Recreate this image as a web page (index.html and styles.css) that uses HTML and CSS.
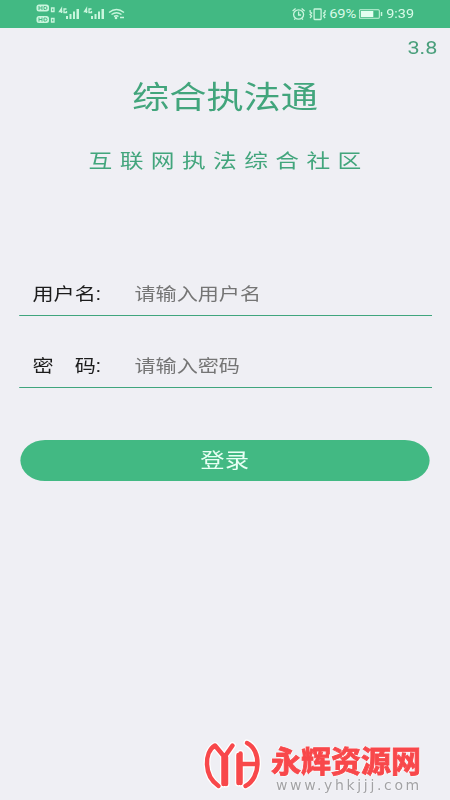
FILE: index.html
```html
<!DOCTYPE html>
<html lang="zh-CN">
<head>
<meta charset="utf-8">
<title>综合执法通</title>
<link rel="stylesheet" href="styles.css">
</head>
<body>
<main class="screen">
  <header class="status">
    <svg class="status-left" width="77" height="24" viewBox="0 0 92.4 24" preserveAspectRatio="none">
      <g fill="#c9f5dd">
        <rect x="0.5" y="4.5" width="12.5" height="7" rx="2.5"/>
        <rect x="0.5" y="16" width="12.5" height="7" rx="2.5"/>
        <path d="M30 16h2v3h-2zM33.5 14h2v5h-2zM37 11.500h2v7.500h-2zM40.500 9h2.500v10h-2.500z"/>
        <path d="M55 16h2v3h-2zM58.500 14h2v5h-2zM62 11.500h2v7.500h-2zM65.500 9h2.500v10h-2.500z"/>
        <circle cx="80" cy="18" r="1.300"/>
      </g>
      <g fill="none" stroke="#42b983" stroke-width="1"><path d="M3 6v4M3 8h3M6 6v4M8 6.500h1.500q1.500 0 1.500 1.500t-1.500 1.500H8zM3 17.500v4M3 19.500h3M6 17.500v4M8 18h1.500q1.500 0 1.500 1.500t-1.500 1.500H8z"/></g>
      <g fill="none" stroke="#c9f5dd" stroke-width="1.300">
        <path d="M15.500 8v3.500h2.500V8zM15.500 18.500V22h2.500v-3.500z"/>
        <path d="M25.500 13V8.500L23.500 11.500h3M30.500 9h-2.500v3.500h2.500V11M50.500 13V8.500L48.500 11.500h3M55.500 9h-2.500v3.500h2.500V11"/>
        <path d="M73 12.500q7.500-6 15 0M75.500 14.500q5-3.500 10 0M78 16.500q2.500-1.500 4.500 0M84 17.500h4" stroke-width="1.500"/>
      </g>
    </svg>
    <div class="status-right">
      <svg class="alarm" width="30" height="14" viewBox="0 0 36 14" preserveAspectRatio="none">
        <g fill="none" stroke="#c9f5dd" stroke-width="1.300">
          <ellipse cx="7" cy="7.500" rx="5" ry="4.700"/>
          <path d="M7 4.500v3.500h2.500M1 4l3-2.500M13 4l-3-2.500M2.500 12.500l1.500-1M11.500 12.500l-1.500-1"/>
          <rect x="22.500" y="2" width="7" height="10.500" rx="0.500"/>
          <path d="M18.500 3v2l1.500 1-1.500 1.500 1.500 1.500-1.500 2M33.500 3v2l-1.500 1 1.500 1.500-1.500 1.500 1.500 2"/>
        </g>
      </svg>
      <span class="percent">69%</span>
      <svg class="battery" width="20" height="10" viewBox="0 0 24 10" preserveAspectRatio="none">
        <rect x="0.500" y="0.700" width="20" height="8.600" rx="1" fill="none" stroke="#c9f5dd"/>
        <rect x="2" y="2" width="12.500" height="6" fill="#e4fff1"/>
        <rect x="22" y="3" width="1.500" height="4" fill="#c9f5dd"/>
      </svg>
      <span class="clock">9:39</span>
    </div>
  </header>
  <div class="version">3.8</div>
  <h1 class="title">综合执法通</h1>
  <p class="subtitle">互联网执法综合社区</p>
  <form class="form">
    <label class="field"><span class="label">用户名:</span><input class="input" type="text" placeholder="请输入用户名"></label>
    <label class="field"><span class="label">密　码:</span><input class="input" type="password" placeholder="请输入密码"></label>
    <button class="login" type="button">登录</button>
  </form>
</main>
<aside class="brand">
  <svg class="brand-logo" width="60" height="54" viewBox="0 0 60 54">
    <defs>
      <path id="mark" d="M17.500 48C2.500 38 3 14 14 7.500L23.500 19L31.500 7.500M22.500 19V46M25 19V46M37.500 17V45M39.500 15.500V45M38 26H56M46 5C60.500 12 60 40 44.500 48"/>
    </defs>
    <use href="#mark" class="mark-halo"/>
    <use href="#mark" class="mark"/>
  </svg>
  <div class="brand-text">
    <div class="brand-name">永辉资源网</div>
    <div class="brand-url">www.yhkjjj.com</div>
  </div>
</aside>
</body>
</html>
```

FILE: styles.css
```css
* { box-sizing: border-box; }
body {
  margin: 0;
  width: 450px;
  height: 800px;
  overflow: hidden;
  position: relative;
  background: #efeff4;
  font-family: Roboto, "Noto Sans CJK SC", sans-serif;
}
/* The whole screen is laid out 375px wide and stretched to 450px. */
.screen {
  width: 375px;
  height: 800px;
  transform: scaleX(1.2);
  transform-origin: 0 0;
}
.status {
  height: 28px;
  padding: 0 30px 0 29.500px;
  display: flex;
  justify-content: space-between;
  background: #42b983;
  color: #d8fae8;
}
.status-right { display: flex; align-items: center; font-size: 12.500px; }
.alarm { margin-right: -1px; }
.percent { width: 24.500px; text-align: right; font-size: 12.300px; letter-spacing: -.1px; }
.alarm, .battery { flex: none; }
.battery { margin: 0 2.500px 0 2.500px; }
.clock { font-size: 12px; }
.version {
  height: 38px;
  padding: 9px 10.500px 0 0;
  line-height: 21px;
  text-align: right;
  font-size: 18px;
  color: #4a9f7c;
}
.title {
  margin: 9px 0 0;
  text-align: center;
  font-size: 31px;
  line-height: 46px;
  font-weight: 400;
  color: #42a57c;
}
.subtitle {
  margin: 26px 0 0;
  padding-left: 6px;
  text-align: center;
  font-size: 19.800px;
  line-height: 30px;
  letter-spacing: 6.150px;
  color: #42a57c;
}
.form { margin: 94px 15.500px 0; }
.field {
  display: flex;
  align-items: center;
  height: 45px;
  margin-bottom: 27px;
  border-bottom: 1px solid #3fa57d;
  padding-left: 11.500px;
  font-size: 17.600px;
  color: #1c1c1c;
}
.label { width: 85px; padding-bottom: 2px; white-space: nowrap; }
.input {
  flex: 1;
  min-width: 0;
  padding: 2px 0 0;
  border: 0;
  outline: 0;
  background: transparent;
  font: inherit;
}
.input::placeholder { color: #757575; opacity: 1; }
.login {
  display: block;
  width: 341.500px;
  height: 41px;
  margin: 52px 0 0 1px;
  padding: 2px 0 0;
  border: 0;
  border-radius: 20.500px;
  background: #42b983;
  color: #e8fff4;
  font: 20.300px/39px Roboto, "Noto Sans CJK SC", sans-serif;
}
.brand {
  position: absolute;
  left: 201px;
  top: 738px;
  display: flex;
}
.brand-logo { flex: none; fill: none; stroke-linecap: round; stroke-linejoin: round; }
.mark-halo { stroke: #fff; stroke-width: 7px; }
.mark { stroke: #f8484b; stroke-width: 4.500px; }
.brand-text { padding: 4px 0 0 10px; white-space: nowrap; }
.brand-name {
  height: 36px;
  font: 700 30px/34px "Noto Sans CJK SC", sans-serif;
  color: #f8484b;
  -webkit-text-stroke: .9px #f8484b;
  text-shadow: 1px 1px 1px #fff, -1px -1px 1px #fff;
}
.brand-url {
  padding-left: 5px;
  font: 14px/14px "DejaVu Sans", sans-serif;
  letter-spacing: 2.650px;
  color: #a2a2a5;
  text-shadow: 0 0 2px #fff;
}
```
